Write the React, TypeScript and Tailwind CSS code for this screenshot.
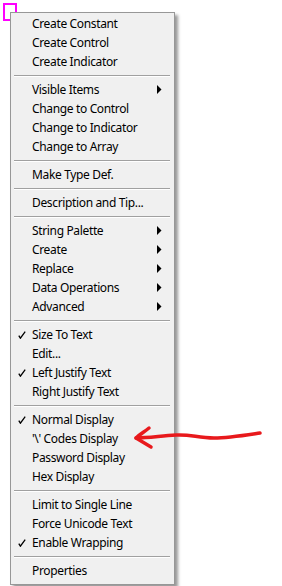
import React from "react";

type Item = { label: string; check?: boolean; sub?: boolean } | "sep";

const items: Item[] = [
  { label: "Create Constant" },
  { label: "Create Control" },
  { label: "Create Indicator" },
  "sep",
  { label: "Visible Items", sub: true },
  { label: "Change to Control" },
  { label: "Change to Indicator" },
  { label: "Change to Array" },
  "sep",
  { label: "Make Type Def." },
  "sep",
  { label: "Description and Tip..." },
  "sep",
  { label: "String Palette", sub: true },
  { label: "Create", sub: true },
  { label: "Replace", sub: true },
  { label: "Data Operations", sub: true },
  { label: "Advanced", sub: true },
  "sep",
  { label: "Size To Text", check: true },
  { label: "Edit..." },
  { label: "Left Justify Text", check: true },
  { label: "Right Justify Text" },
  "sep",
  { label: "Normal Display", check: true },
  { label: "'\\' Codes Display" },
  { label: "Password Display" },
  { label: "Hex Display" },
  "sep",
  { label: "Limit to Single Line" },
  { label: "Force Unicode Text" },
  { label: "Enable Wrapping", check: true },
  "sep",
  { label: "Properties" },
];

function Check() {
  return (
    <svg width="8" height="8" viewBox="0 0 8 8">
      <path d="M0.8 4.6 L2.4 7.2 L7.2 0.6" fill="none" stroke="#000" strokeWidth="1.3" />
    </svg>
  );
}

function Arrow() {
  return (
    <svg width="5" height="9" viewBox="0 0 5 9">
      <path d="M0 0 L4.5 4.5 L0 9 Z" fill="#000" />
    </svg>
  );
}

export default function App() {
  return (
    <div className="relative w-[282px] h-[586px] bg-white overflow-hidden pt-[12px] pl-[10px]">
      <div className="absolute left-[3px] top-[3px] w-[14px] h-[18px] border-2 border-[#ff00ff]" />

      <div
        className="relative w-[165px] bg-[#f0f0f0] border border-[#979797] pt-[1px] pb-[4px] shadow-[3px_3px_3px_rgba(0,0,0,0.4)] text-black text-[12px] tracking-[-0.35px]"
        style={{ fontFamily: '"Noto Sans", "Open Sans", sans-serif' }}
      >
        {items.map((it, i) =>
          it === "sep" ? (
            <div key={i} className="h-[9px] flex flex-col justify-center pl-[3px] pr-[4px]">
              <div className="h-px bg-[#a0a0a0]" />
              <div className="h-px bg-white" />
            </div>
          ) : (
            <div key={i} className="h-[19px] flex items-center">
              <div className="w-[21px] pl-[7px] flex items-center">{it.check && <Check />}</div>
              <span className="flex-1 leading-[19px] whitespace-nowrap">{it.label}</span>
              <div className="w-[5px] mr-[12px] flex items-center">{it.sub && <Arrow />}</div>
            </div>
          )
        )}
      </div>

      <svg className="absolute left-0 top-0" width="282" height="586" viewBox="0 0 282 586">
        <path
          d="M260 433 C240 436 228 438 214 438 C198 438 190 434 176 435 C160 436 148 438 136 438"
          fill="none"
          stroke="#e8191c"
          strokeWidth="3.5"
          strokeLinecap="round"
        />
        <path
          d="M149 428 C144 432 139 435 136 438 C141 441 146 444 151 447"
          fill="none"
          stroke="#e8191c"
          strokeWidth="3.5"
          strokeLinecap="round"
          strokeLinejoin="round"
        />
      </svg>
    </div>
  );
}
